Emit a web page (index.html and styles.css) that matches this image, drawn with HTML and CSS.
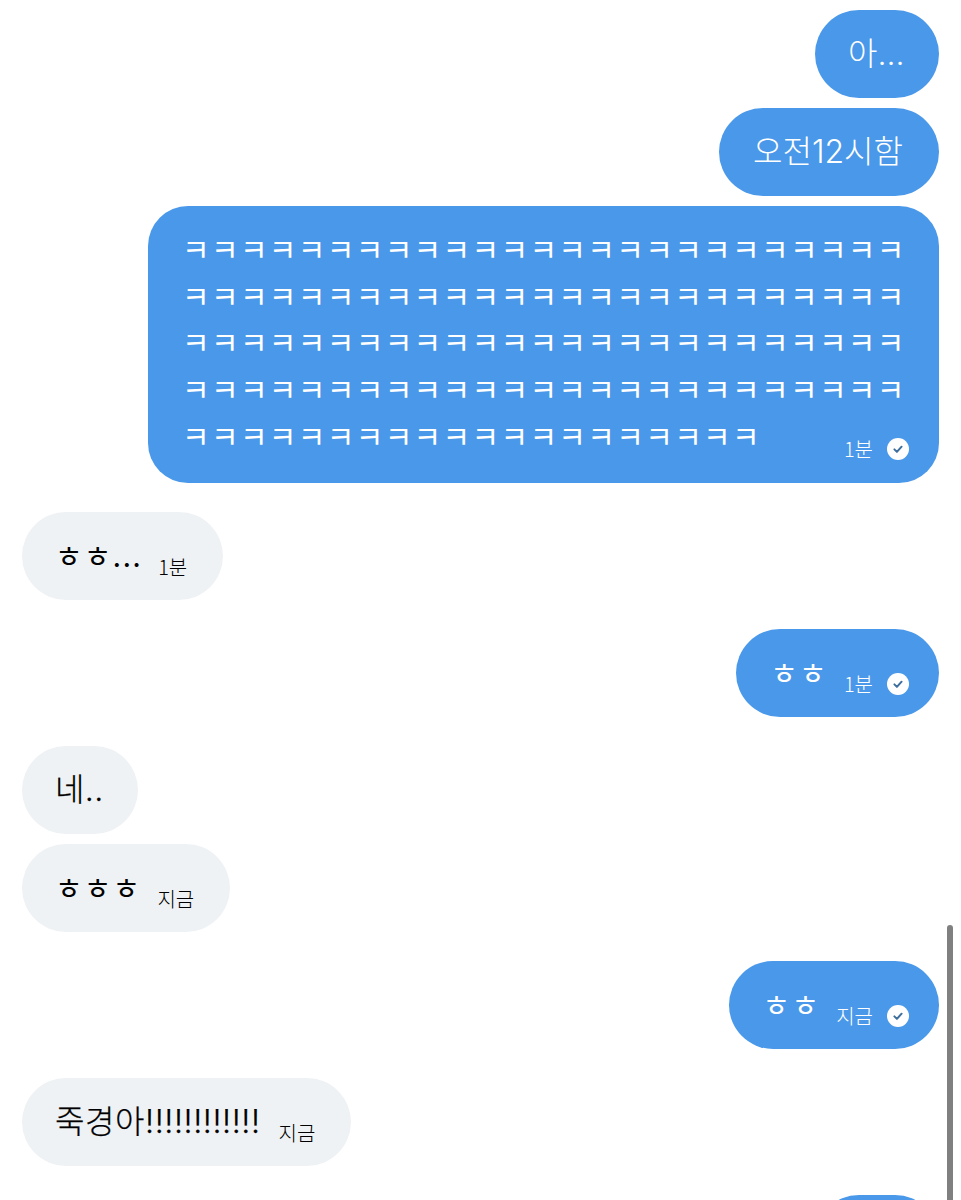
FILE: index.html
```html
<!DOCTYPE html>
<html lang="ko">
<head>
<meta charset="utf-8">
<title>채팅</title>
<link rel="stylesheet" href="styles.css">
</head>
<body>
<main class="chat">
  <section class="group mine">
    <div class="bubble short"><span class="text">아...</span></div>
    <div class="bubble"><span class="text">오전12시함</span></div>
    <div class="bubble long">
      <p class="text laughs">ㅋㅋㅋㅋㅋㅋㅋㅋㅋㅋㅋㅋㅋㅋㅋㅋㅋㅋㅋㅋㅋㅋㅋㅋㅋㅋㅋㅋㅋㅋㅋㅋㅋㅋㅋㅋㅋㅋㅋㅋㅋㅋㅋㅋㅋㅋㅋㅋㅋㅋㅋㅋㅋㅋㅋㅋㅋㅋㅋㅋㅋㅋㅋㅋㅋㅋㅋㅋㅋㅋㅋㅋㅋㅋㅋㅋㅋㅋㅋㅋㅋㅋㅋㅋㅋㅋㅋㅋㅋㅋㅋㅋㅋㅋㅋㅋㅋㅋㅋㅋㅋㅋㅋㅋㅋㅋㅋㅋㅋㅋㅋㅋㅋㅋㅋㅋㅋㅋㅋㅋ</p>
      <div class="meta"><span class="time">1분</span><svg class="check" viewBox="0 0 22 22"><circle cx="11" cy="11" r="11" fill="#fff"/><path d="M7.4 11.4l2.5 2.5 4.7-5.2" fill="none" stroke="#3f6f9f" stroke-width="2" stroke-linecap="round" stroke-linejoin="round"/></svg></div>
    </div>
  </section>
  <section class="group theirs">
    <div class="bubble"><span class="text jamo">ㅎㅎ...</span><div class="meta"><span class="time">1분</span></div></div>
  </section>
  <section class="group mine">
    <div class="bubble"><span class="text jamo">ㅎㅎ</span><div class="meta"><span class="time">1분</span><svg class="check" viewBox="0 0 22 22"><circle cx="11" cy="11" r="11" fill="#fff"/><path d="M7.4 11.4l2.5 2.5 4.7-5.2" fill="none" stroke="#3f6f9f" stroke-width="2" stroke-linecap="round" stroke-linejoin="round"/></svg></div></div>
  </section>
  <section class="group theirs">
    <div class="bubble tiny"><span class="text">네..</span></div>
    <div class="bubble"><span class="text jamo">ㅎㅎㅎ</span><div class="meta"><span class="time">지금</span></div></div>
  </section>
  <section class="group mine">
    <div class="bubble"><span class="text jamo">ㅎㅎ</span><div class="meta"><span class="time">지금</span><svg class="check" viewBox="0 0 22 22"><circle cx="11" cy="11" r="11" fill="#fff"/><path d="M7.4 11.4l2.5 2.5 4.7-5.2" fill="none" stroke="#3f6f9f" stroke-width="2" stroke-linecap="round" stroke-linejoin="round"/></svg></div></div>
  </section>
  <section class="group theirs">
    <div class="bubble"><span class="text exclaim">죽경아!!!!!!!!!!!!</span><div class="meta"><span class="time">지금</span></div></div>
  </section>
  <section class="group mine">
    <div class="bubble next"></div>
  </section>
</main>
<div class="scrollbar"></div>
</body>
</html>
```

FILE: styles.css
```css
html, body {
  margin: 0;
  height: 1200px;
  overflow: hidden;
  background: #fff;
}

body {
  font-family: Inter, "Noto Sans CJK KR", "Liberation Sans", sans-serif;
}

.chat {
  display: flex;
  flex-direction: column;
  gap: 29px;
  padding: 10px 22px 0;
}

.group {
  display: flex;
  flex-direction: column;
  gap: 10px;
}

.mine { align-items: flex-end; }
.theirs { align-items: flex-start; }

.bubble {
  box-sizing: border-box;
  display: flex;
  align-items: center;
  gap: 18px;
  height: 88px;
  padding: 0 36px 0 34px;
  border-radius: 44px;
}

.theirs .bubble { padding-left: 33px; }

.short { width: 124px; padding-left: 33px; }
.theirs .tiny { width: 116px; }

.mine .bubble { background: #4a98ea; color: #fff; }
.theirs .bubble { background: #eff2f4; color: #000; }

.text {
  margin: 0;
  font-size: 32px;
  font-weight: 300;
  line-height: 46.7px;
  white-space: nowrap;
}

.theirs .text {
  letter-spacing: 0.4px;
  -webkit-text-stroke: 0.25px #000;
}

.theirs .exclaim { letter-spacing: 0.6px; }

.theirs .jamo, .mine .jamo {
  margin-right: -2px;
  font-size: 30px;
  font-weight: 400;
  letter-spacing: 1.2px;
  -webkit-text-stroke: 0;
}

.meta {
  display: flex;
  align-items: center;
  gap: 14px;
  margin-top: 22px;
}

.mine .meta { margin-right: -6px; }

.time {
  font-family: "Noto Sans CJK KR", "Liberation Sans", sans-serif;
  font-size: 20px;
  font-weight: 300;
  line-height: 28px;
}

.check {
  width: 22px;
  height: 22px;
  flex: none;
}

.long {
  display: grid;
  align-items: start;
  width: 791px;
  height: 277px;
  padding: 21px 30px 19px 34px;
  border-radius: 40px;
}

.long .text, .long .meta { grid-area: 1 / 1; }

.laughs {
  width: 727px;
  white-space: normal;
  word-break: break-all;
  font-size: 30px;
  font-weight: 400;
  letter-spacing: 1.35px;
}

.long .meta {
  align-self: end;
  justify-self: end;
  margin: 0 0 1px;
}

.next { width: 124px; }

.scrollbar {
  position: absolute;
  left: 947px;
  top: 925px;
  width: 6px;
  height: 275px;
  border-radius: 3px 3px 0 0;
  background: #808080;
}
```
